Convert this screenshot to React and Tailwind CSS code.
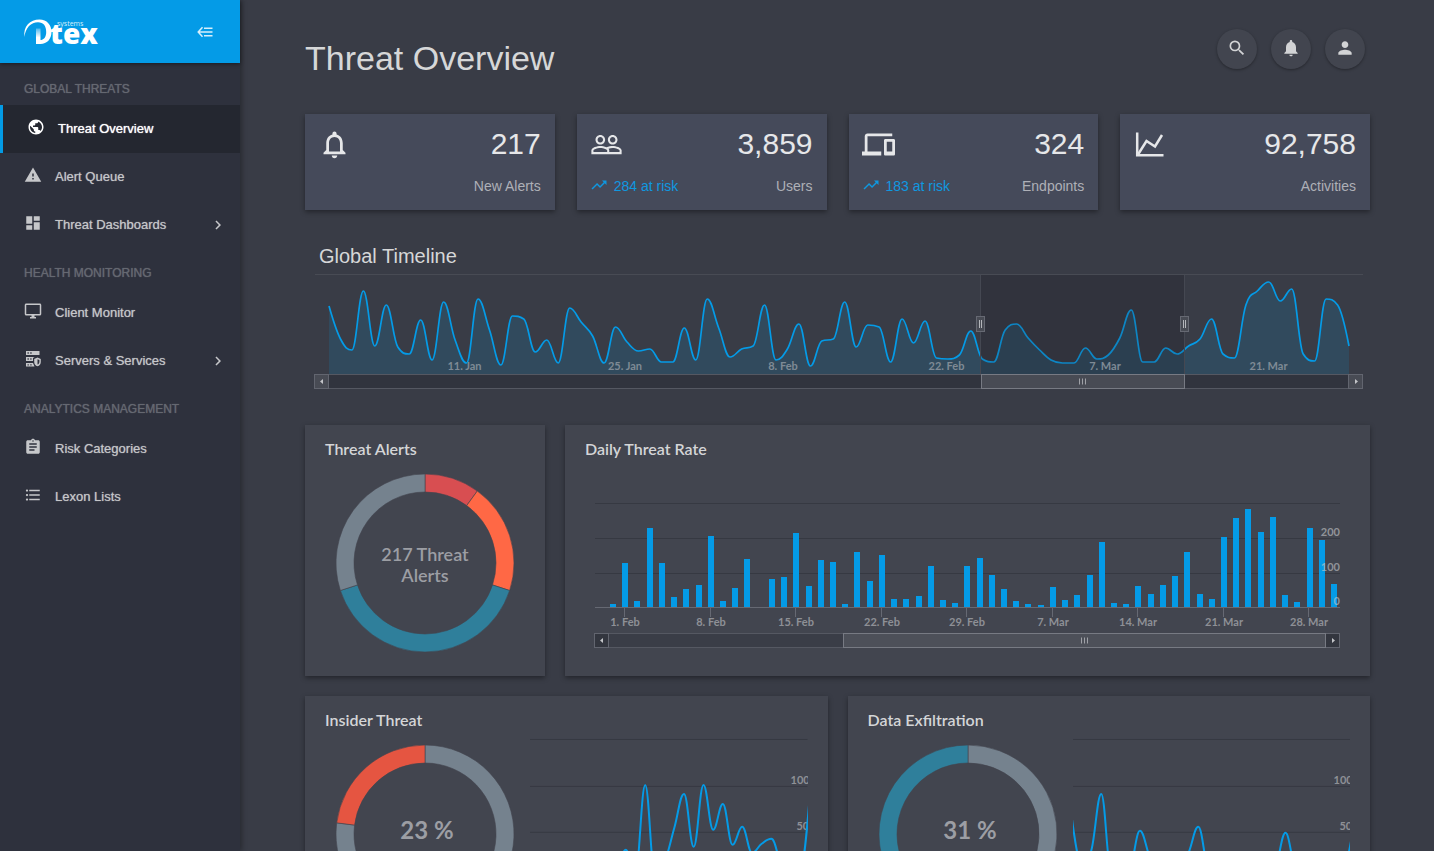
import React from "react";
import {
  MdPublic,
  MdWarning,
  MdDashboard,
  MdAssignment,
  MdFormatListBulleted,
  MdChevronRight,
  MdSearch,
  MdNotifications,
  MdPerson,
  MdNotificationsNone,
  MdPeopleOutline,
  MdDevices,
  MdTrendingUp,
} from "react-icons/md";

/* ---------- chart helpers ---------- */

// Smooth spline whose extremes never overshoot the data.
function splinePath(pts) {
  const s = 1.5;
  const d = s + 1;
  let path = `M${pts[0][0]} ${pts[0][1]}`;
  let prevRight = null;
  for (let i = 0; i < pts.length; i++) {
    const [x, y] = pts[i];
    const last = pts[i - 1];
    const next = pts[i + 1];
    let left = [x, y];
    let right = [x, y];
    if (last && next) {
      const lx = (s * x + last[0]) / d;
      let ly = (s * y + last[1]) / d;
      const rx = (s * x + next[0]) / d;
      let ry = (s * y + next[1]) / d;
      const c = ((ry - ly) * (rx - x)) / (rx - lx) + y - ry;
      ly += c;
      ry += c;
      if (ly > last[1] && ly > y) {
        ly = Math.max(last[1], y);
        ry = 2 * y - ly;
      } else if (ly < last[1] && ly < y) {
        ly = Math.min(last[1], y);
        ry = 2 * y - ly;
      }
      if (ry > next[1] && ry > y) {
        ry = Math.max(next[1], y);
        ly = 2 * y - ry;
      } else if (ry < next[1] && ry < y) {
        ry = Math.min(next[1], y);
        ly = 2 * y - ry;
      }
      left = [lx, ly];
      right = [rx, ry];
    }
    if (last) {
      path += `C${prevRight[0].toFixed(2)} ${prevRight[1].toFixed(2)} ${left[0].toFixed(2)} ${left[1].toFixed(2)} ${x} ${y}`;
    }
    prevRight = right;
  }
  return path;
}

function arcPath(cx, cy, r1, r2, from, to) {
  const p = (r, t) => {
    const a = t * 2 * Math.PI - Math.PI / 2;
    return `${(cx + r * Math.cos(a)).toFixed(2)} ${(cy + r * Math.sin(a)).toFixed(2)}`;
  };
  const big = to - from > 0.5 ? 1 : 0;
  return `M${p(r1, from)}A${r1} ${r1} 0 ${big} 1 ${p(r1, to)}L${p(r2, to)}A${r2} ${r2} 0 ${big} 0 ${p(r2, from)}Z`;
}

/* ---------- custom icons ---------- */

function Logo() {
  return (
    <svg width="76" height="30" viewBox="0 0 76 30" className="overflow-visible" role="img" aria-label="Dtex systems">
      <defs>
        <linearGradient id="stem" x1="0" y1="0" x2="0" y2="1">
          <stop offset="0" stopColor="#fff" stopOpacity="0.3" />
          <stop offset="0.6" stopColor="#fff" />
        </linearGradient>
      </defs>
      <path
        d="M0.500 20C-1 9.500 6 2.500 15.500 2.500C23 2.500 27.500 8 27.500 15C27.500 22 23 27 16.500 27H12V23.100H16C20 23.100 22.200 20 22.200 15C22.200 9 19.500 5.300 14 5.300C7 5.300 1.500 10.500 0.500 20Z"
        fill="#fff"
      />
      <rect x="12" y="11.500" width="4.500" height="15" fill="url(#stem)" />
      <text x="26" y="27" fill="#fff" className="font-['Open_Sans',sans-serif] text-[28px] font-extrabold">
        tex
      </text>
      <text x="33" y="9" fill="#d7effb" className="font-['Open_Sans',sans-serif] text-[7px]">
        systems
      </text>
    </svg>
  );
}

function CollapseIcon() {
  return (
    <svg width="16" height="12" viewBox="0 0 16 12" fill="none" stroke="#d7effb" strokeWidth="1.500">
      <path d="M5.500 1.200L1.200 6l4.300 4.800M1.200 6H15.500M7 2.200h8.500M7 9.800h8.500" />
    </svg>
  );
}

function MonitorIcon({ size }) {
  return (
    <svg width={size} height={size} viewBox="0 0 24 24" fill="currentColor">
      <path d="M21 2H3c-1.100 0-2 .9-2 2v12c0 1.100.9 2 2 2h7v2H8v2h8v-2h-2v-2h7c1.100 0 2-.9 2-2V4c0-1.100-.9-2-2-2zm0 14H3V4h18v12z" />
    </svg>
  );
}

function ServersIcon({ size }) {
  return (
    <svg width={size} height={size} viewBox="0 0 18 18" fill="currentColor">
      <path
        fillRule="evenodd"
        d="M2 1h13.500v4H2zM3.500 2.300v1.400h1.300V2.300zM6.300 2.300v1.400h1.300V2.300zM2 7h8.500l-1.500 1v3H2zM3.500 8.300v1.400h1.300V8.300zM6.300 8.300v1.400h1.200V8.300zM2 13h7l1.500 3.500H2zM3.500 14.200v1.400h1.300v-1.400zM6.300 14.200v1.400h1.300v-1.400z"
      />
      <path d="M13.500 7.600l3.300 1.300v3c0 2-1.300 3.600-3.300 4.400c-2-.8-3.300-2.400-3.300-4.400v-3z" />
      <path d="M13.500 9.200v5.400c1.200-.6 1.900-1.600 1.900-2.900V9.900z" fill="#2e313d" />
    </svg>
  );
}

function LineChartIcon({ size }) {
  return (
    <svg width={size} height={size} viewBox="0 0 33 33" fill="none" stroke="currentColor" strokeWidth="2.500">
      <path d="M4.200 4.500V27.300H30.500" />
      <path d="M5 26.500L13.500 13l8.500 5.500L29 7" />
    </svg>
  );
}

/* ---------- navigation ---------- */

const NAV = [
  {
    title: "GLOBAL THREATS",
    items: [
      { label: "Threat Overview", Icon: MdPublic, active: true },
      { label: "Alert Queue", Icon: MdWarning },
      { label: "Threat Dashboards", Icon: MdDashboard, more: true },
    ],
  },
  {
    title: "HEALTH MONITORING",
    items: [
      { label: "Client Monitor", Icon: MonitorIcon },
      { label: "Servers & Services", Icon: ServersIcon, more: true },
    ],
  },
  {
    title: "ANALYTICS MANAGEMENT",
    items: [
      { label: "Risk Categories", Icon: MdAssignment },
      { label: "Lexon Lists", Icon: MdFormatListBulleted },
    ],
  },
];

function NavItem({ label, Icon, active, more }) {
  const base = "flex h-12 w-full items-center gap-[13px] pl-6 pr-[13px] text-left text-[13px] leading-5";
  const tone = active
    ? "border-l-[3px] border-[#039be5] bg-[#242730] text-white [text-shadow:0_0_1px_#ffffff]"
    : "text-[#c6c7ca] [text-shadow:0_0_1px_#c6c7cac0]";
  const content = (
    <>
      <span className="pb-[5px]">
        <Icon size={18} />
      </span>
      <span className="flex-1">{label}</span>
      {more && <MdChevronRight size={18} />}
    </>
  );
  return more ? (
    <button type="button" aria-expanded="false" className={`${base} ${tone}`}>
      {content}
    </button>
  ) : (
    <a href="#" aria-current={active ? "page" : undefined} className={`${base} ${tone}`}>
      {content}
    </a>
  );
}

function Sidebar() {
  return (
    <aside className="z-10 w-60 shrink-0 bg-[#2e313d] shadow-[2px_0_5px_rgba(0,0,0,0.3)]">
      <div className="flex h-[63px] items-center justify-between bg-[#049be7] pl-6 pr-[27px] shadow-[0_1px_4px_rgba(0,0,0,0.45)]">
        <a href="#">
          <Logo />
        </a>
        <button type="button" aria-label="Collapse menu">
          <CollapseIcon />
        </button>
      </div>
      <nav className="pt-[2px]">
        {NAV.map((group) => (
          <section key={group.title}>
            <h2 className="flex h-10 items-center pl-6 pt-2 text-[12px] text-[#656871] [text-shadow:0_0_1px_#656871]">
              {group.title}
            </h2>
            {group.items.map((item) => (
              <NavItem key={item.label} {...item} />
            ))}
          </section>
        ))}
      </nav>
    </aside>
  );
}

/* ---------- stat cards ---------- */

const STATS = [
  { value: "217", label: "New Alerts", Icon: MdNotificationsNone },
  { value: "3,859", label: "Users", risk: "284 at risk", Icon: MdPeopleOutline },
  { value: "324", label: "Endpoints", risk: "183 at risk", Icon: MdDevices },
  { value: "92,758", label: "Activities", Icon: LineChartIcon },
];

function StatCard({ value, label, risk, Icon }) {
  return (
    <article className="flex flex-col gap-3 bg-[#454a5a] py-3 pl-[13px] pr-[14px] text-[#e6e7e9] shadow-[0_2px_5px_rgba(0,0,0,0.4)]">
      <div className="flex h-9 items-center justify-between">
        <Icon size={33} />
        <span className="text-[30px] leading-9">{value}</span>
      </div>
      <div className="flex h-6 items-center justify-between text-sm text-[#aeb0b7]">
        {risk ? (
          <a href="#" className="flex items-center gap-[6px] text-[#0f98e0]">
            <span className="pb-[3px]">
              <MdTrendingUp size={18} />
            </span>
            {risk}
          </a>
        ) : (
          <span />
        )}
        <span>{label}</span>
      </div>
    </article>
  );
}

/* ---------- timeline ---------- */

const TIMELINE = [
  306, 339, 350, 291, 346, 305, 347, 354, 320, 360, 302, 340, 363, 299, 330, 365, 316, 319, 352, 340, 363, 308, 322,
  336, 363, 327, 342, 351, 349, 362, 362, 328, 360, 299, 328, 357, 349, 346, 305, 360, 349, 324, 366, 341, 339, 302,
  347, 325, 327, 362, 319, 343, 321, 358, 359, 355, 331, 359, 362, 330, 324, 338, 350, 360, 363, 363, 348, 359, 355,
  338, 310, 362, 362, 348, 354, 346, 339, 319, 354, 358, 305, 291, 282, 301, 289, 354, 361, 299, 305, 346,
].map((y, i) => [+(329 + i * 11.461).toFixed(1), y]);

const TIMELINE_LABELS = [
  [464.5, "11. Jan"],
  [625, "25. Jan"],
  [783, "8. Feb"],
  [946.5, "22. Feb"],
  [1105, "7. Mar"],
  [1268.5, "21. Mar"],
];

const LABEL = "font-['Lato',sans-serif] text-[11px] font-bold";

function Handle({ x }) {
  return (
    <g>
      <rect x={x - 4} y="316.500" width="8" height="15" fill="#484b54" stroke="#666973" />
      <path d={`M${x - 1} 320v8M${x + 1} 320v8`} stroke="#b4b6bb" />
    </g>
  );
}

function ScrollTrack({ left, right, y, from, to, track, button, thumb }) {
  const mid = Math.round((from + to) / 2) - 0.5;
  return (
    <g>
      <rect x={left} y={y} width={right - left} height="14" fill={track} stroke="#555862" />
      <rect x={left} y={y} width="14" height="14" fill={button} stroke="#62656f" />
      <rect x={right - 14} y={y} width="14" height="14" fill={button} stroke="#62656f" />
      <path d={`M${left + 8.5} ${y + 4.5}v5l-3 -2.500z`} fill="#c4c5c9" />
      <path d={`M${right - 7.5} ${y + 4.5}v5l3 -2.500z`} fill="#c4c5c9" />
      <rect x={from} y={y} width={to - from} height="14" fill={thumb} stroke="#777a83" />
      <path d={`M${mid - 3} ${y + 4}v6M${mid} ${y + 4}v6M${mid + 3} ${y + 4}v6`} stroke="#9fa1a7" />
    </g>
  );
}

function Timeline() {
  const line = splinePath(TIMELINE);
  return (
    <svg viewBox="305 268 1065 124" className="block h-auto w-full" role="img" aria-label="Global timeline">
      <path d="M315 274.500H1363" stroke="#484b54" />
      <rect x="981" y="275" width="203.500" height="99" fill="#31343e" />
      <path d={`${line}V374H329Z`} fill="#049be7" fillOpacity="0.150" />
      <path d={line} fill="none" stroke="#049be7" strokeWidth="1.700" strokeLinejoin="round" />
      <rect x="981" y="275" width="203.500" height="99" fill="#31343e" fillOpacity="0.200" />
      <path d="M980.500 275V374M1184.500 275V374" stroke="#454852" />
      {TIMELINE_LABELS.map(([x, t]) => (
        <text key={t} x={x} y="370" textAnchor="middle" fill="#7f8a95" className={LABEL}>
          {t}
        </text>
      ))}
      <ScrollTrack left={314.5} right={1362.5} y={374.5} from={981.5} to={1184.5} track="#31343e" button="#484b54" thumb="#484b54" />
      <Handle x={980.5} />
      <Handle x={1184.5} />
    </svg>
  );
}

/* ---------- panels ---------- */

function Panel({ title, children }) {
  return (
    <section className="bg-[#42454f] pb-5 pt-3 shadow-[0_2px_5px_rgba(0,0,0,0.4)]">
      <h3 className="mb-3 px-5 font-['Lato',sans-serif] text-base font-semibold leading-6 text-[#d4d5d7]">{title}</h3>
      {children}
    </section>
  );
}

function Donut({ slices, lines, big }) {
  let at = 0;
  return (
    <svg viewBox="0 0 180 180" className="block size-[180px] shrink-0" role="img" aria-label={lines.join(" ")}>
      {slices.map(([share, color], i) => {
        const d = arcPath(90, 90, 89, 71, at, at + share);
        at += share;
        return <path key={i} d={d} fill={color} stroke="#42454f" strokeOpacity="0.600" />;
      })}
      {lines.map((t, i) => (
        <text
          key={t}
          x={big ? 92 : 90}
          y={big ? 95 : 88 + i * 21}
          textAnchor="middle"
          fill="#9c9ea4"
          className={big ? "font-['Lato',sans-serif] text-[24px] font-bold" : "font-['Lato',sans-serif] text-[18px] font-semibold"}
        >
          {t}
        </text>
      ))}
    </svg>
  );
}

const BARS = [
  3, 44, 6, 79, 44, 10, 18, 22, 71, 6, 19, 48, 0, 28, 30, 74, 21, 47, 45, 3, 55, 26, 52, 8, 8, 11, 41, 7, 4, 41, 49, 32,
  18, 6, 3, 2, 20, 7, 12, 32, 65, 4, 3, 21, 13, 22, 31, 55, 13, 8, 70, 89, 98, 75, 90, 12, 5, 79, 67, 23,
];

const DAYS = [
  [624.5, "1. Feb"],
  [710.5, "8. Feb"],
  [795.5, "15. Feb"],
  [881.5, "22. Feb"],
  [966.5, "29. Feb"],
  [1052.5, "7. Mar"],
  [1137.5, "14. Mar"],
  [1223.5, "21. Mar"],
  [1308.5, "28. Mar"],
];

function DailyRate() {
  return (
    <svg viewBox="565 473 805 183" className="block h-auto w-full" role="img" aria-label="Daily threat rate">
      <path d="M595 503.500H1340M595 538.500H1340M595 573.500H1340" stroke="#363942" />
      {BARS.map((h, i) => (
        <rect key={i} x={Math.round(610 + i * 12.22)} y={607 - h} width="6" height={h} fill="#049be7" />
      ))}
      <path d="M595 607.500H1340" stroke="#666973" />
      {DAYS.map(([x, t]) => (
        <g key={t}>
          <path d={`M${x} 607.500V617`} stroke="#666973" />
          <text x={x + 0.5} y="626" textAnchor="middle" fill="#8e9096" className={LABEL}>
            {t}
          </text>
        </g>
      ))}
      {[
        [536, "200"],
        [571, "100"],
        [605, "0"],
      ].map(([y, t]) => (
        <text key={t} x="1340" y={y} textAnchor="end" fill="#c8c9cc" fillOpacity="0.600" className={LABEL}>
          {t}
        </text>
      ))}
      <ScrollTrack left={594.5} right={1339.5} y={633.5} from={843.5} to={1325.5} track="#3a3d47" button="#33363f" thumb="#4d5059" />
    </svg>
  );
}

function TrendLine({ points, label }) {
  return (
    <div className="-mt-[6px] min-w-0 flex-1 overflow-hidden">
      <svg viewBox="0 -6 278 186" className="block h-auto w-full" role="img" aria-label={label}>
        <path d="M0 -4.500H278M0 42.500H278M0 88.500H278M0 135.500H278" stroke="#363942" />
        <text x="261" y="40" fill="#8e9096" className={LABEL}>
          100
        </text>
        <text x="267" y="86" fill="#8e9096" className={LABEL}>
          50
        </text>
        <path d={splinePath(points)} fill="none" stroke="#049be7" strokeWidth="2" strokeLinejoin="round" />
      </svg>
    </div>
  );
}

const step = (start, ys) => ys.map((y, i) => [+(start + i * 9.72).toFixed(1), y - 744]);

const INSIDER = step(-1.2, [
  872, 868, 874, 866, 872, 876, 865, 870, 874, 868, 850, 872, 785, 876, 862, 828, 794, 847, 785, 830, 804, 845, 827, 853,
  844, 839, 864, 876, 872, 790,
]);

const EXFIL = step(-0.9, [
  820, 866, 850, 794, 872, 876, 868, 831, 857, 874, 870, 868, 853, 827, 868, 876, 872, 868, 874, 870, 874, 866, 833, 868,
  874, 870, 875, 872, 868, 826,
]);

function RatioPanel({ title, slices, lines, points }) {
  return (
    <Panel title={title}>
      <div className="flex items-start gap-[15px] pl-[30px] pr-5">
        <Donut big slices={slices} lines={lines} />
        <TrendLine points={points} label={`${title} trend`} />
      </div>
    </Panel>
  );
}

/* ---------- page ---------- */

const ACTIONS = [
  ["Search", MdSearch],
  ["Notifications", MdNotifications],
  ["Account", MdPerson],
];

export default function App() {
  return (
    <div className="flex h-screen overflow-hidden bg-[#393c46] font-['Liberation_Sans',Arial,sans-serif]">
      <Sidebar />
      <main className="min-w-0 flex-1 overflow-y-auto pb-10 pl-[65px] pr-16 pt-[29px] [scrollbar-width:none]">
        <header className="mb-9 flex items-start justify-between pr-[5px]">
          <h1 className="pt-[9px] text-[34px] leading-10 text-[#d6d7d8]">Threat Overview</h1>
          <div className="flex gap-[14px]">
            {ACTIONS.map(([name, Icon]) => (
              <button
                key={name}
                type="button"
                aria-label={name}
                className="flex size-10 items-center justify-center rounded-full bg-[#42454f] pb-[2px] text-[#d2d3d5] shadow-[0_1px_3px_rgba(0,0,0,0.35)]"
              >
                <Icon size={20} />
              </button>
            ))}
          </div>
        </header>

        <div className="grid grid-cols-4 gap-[22px]">
          {STATS.map((s) => (
            <StatCard key={s.label} {...s} />
          ))}
        </div>

        <h2 className="mt-[34px] pl-[14px] text-xl leading-6 text-[#d6d7d8]">Global Timeline</h2>
        <Timeline />

        <div className="mt-[33px] grid grid-cols-[240px_1fr] gap-5">
          <Panel title="Threat Alerts">
            <div className="flex justify-center">
              <Donut
                slices={[
                  [0.1, "#d84e51"],
                  [0.2, "#ff6845"],
                  [0.4, "#2f7f9b"],
                  [0.3, "#75828e"],
                ]}
                lines={["217 Threat", "Alerts"]}
              />
            </div>
          </Panel>
          <Panel title="Daily Threat Rate">
            <DailyRate />
          </Panel>
        </div>

        <div className="mt-5 grid grid-cols-2 gap-5">
          <RatioPanel
            title="Insider Threat"
            slices={[
              [0.77, "#75828e"],
              [0.23, "#e55541"],
            ]}
            lines={["23 %"]}
            points={INSIDER}
          />
          <RatioPanel
            title="Data Exfiltration"
            slices={[
              [0.69, "#75828e"],
              [0.31, "#2f7f9b"],
            ]}
            lines={["31 %"]}
            points={EXFIL}
          />
        </div>
      </main>
    </div>
  );
}
